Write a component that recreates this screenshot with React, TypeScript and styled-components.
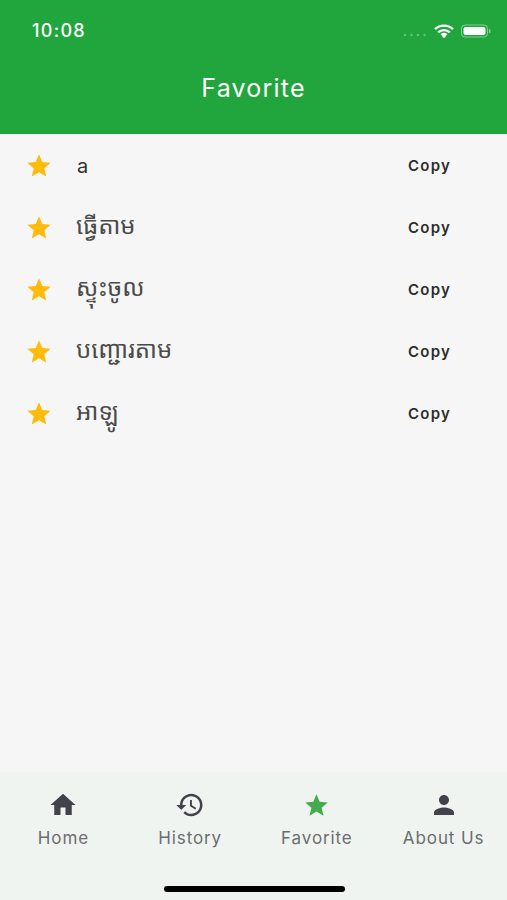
import React from "react";
import styled, { createGlobalStyle } from "styled-components";

const Global = createGlobalStyle`
  html, body { margin: 0; padding: 0; background: #f6f6f6; }
  #root { width: 507px; height: 900px; overflow: hidden; }
  * { box-sizing: border-box; }
`;

const Screen = styled.div`
  width: 507px;
  height: 900px;
  display: flex;
  flex-direction: column;
  font-family: "Inter", "Liberation Sans", sans-serif;
  background: #f6f6f6;
`;

const Header = styled.header`
  height: 134px;
  flex: none;
  background: #21a53d;
  color: #fff;
  display: flex;
  flex-direction: column;
`;

const StatusBar = styled.div`
  height: 74px;
  padding: 20px 16px 0 32px;
  display: flex;
  justify-content: space-between;
  align-items: flex-start;
`;

const Clock = styled.span`
  font-size: 18px;
  line-height: 22px;
  font-weight: 500;
  letter-spacing: 1.3px;
`;

const StatusIcons = styled.div`
  display: flex;
  align-items: center;
  gap: 7px;
  height: 22px;
`;

const Title = styled.h1`
  margin: 0;
  text-align: center;
  font-size: 25px;
  line-height: 28px;
  font-weight: 400;
  letter-spacing: 1.2px;
`;

const List = styled.main`
  flex: 1;
  padding-top: 1px;
`;

const Row = styled.div`
  height: 62px;
  display: flex;
  align-items: center;
  padding: 0 56px 0 25px;
`;

const StarSlot = styled.span`
  width: 51px;
  flex: none;
  display: flex;
`;

const Word = styled.span<{ $latin?: boolean }>`
  flex: 1;
  color: ${(p) => (p.$latin ? "#333" : "#4a4a4a")};
  font-family: "Inter", "Noto Sans Khmer", "Khmer OS", "DejaVu Sans", sans-serif;
  font-size: ${(p) => (p.$latin ? "20px" : "24px")};
  padding-left: ${(p) => (p.$latin ? "1px" : "0")};
  padding-bottom: ${(p) => (p.$latin ? "0" : "7px")};
`;

const CopyLabel = styled.span`
  font-size: 15px;
  font-weight: 600;
  letter-spacing: 1.2px;
  color: #2c2c2c;
  padding-bottom: 2px;
`;

const TabBar = styled.nav`
  height: 128px;
  flex: none;
  background: #eff4f1;
  display: flex;
  flex-direction: column;
`;

const Tabs = styled.div`
  display: grid;
  grid-template-columns: repeat(4, 1fr);
  padding-top: 18px;
`;

const Tab = styled.div`
  display: flex;
  flex-direction: column;
  align-items: center;
  gap: 8px;
`;

const IconSlot = styled.span`
  height: 30px;
  display: flex;
  align-items: center;
  justify-content: center;
`;

const TabLabel = styled.span`
  font-size: 17px;
  line-height: 20px;
  letter-spacing: 0.9px;
  color: #6b6e70;
`;

const HomeIndicator = styled.div`
  width: 181px;
  height: 6px;
  border-radius: 3px;
  background: #000;
  margin: 38px 0 0 164px;
`;

const StarIcon = ({ size, color }: { size: number; color: string }) => (
  <svg width={size} height={size} viewBox="0 0 24 24" fill={color}>
    <path d="M12 17.27 18.18 21l-1.64-7.03L22 9.24l-7.19-.61L12 2 9.19 8.63 2 9.24l5.46 4.73L5.82 21z" />
  </svg>
);

const HomeIcon = () => (
  <svg width="30" height="30" viewBox="0 0 24 24" fill="#42434a">
    <path d="M10 20v-6h4v6h5v-8h3L12 3 2 12h3v8z" />
  </svg>
);

const HistoryIcon = () => (
  <svg width="30" height="30" viewBox="0 0 24 24" fill="#42434a">
    <path d="M13 3c-4.97 0-9 4.03-9 9H1l3.89 3.89.07.14L9 12H6c0-3.87 3.13-7 7-7s7 3.13 7 7-3.13 7-7 7c-1.93 0-3.68-.79-4.94-2.06l-1.42 1.42C8.27 19.99 10.51 21 13 21c4.97 0 9-4.03 9-9s-4.03-9-9-9zm-1 5v5l4.28 2.54.72-1.21-3.5-2.08V8H12z" />
  </svg>
);

const PersonIcon = () => (
  <svg width="30" height="30" viewBox="0 0 24 24" fill="#42434a">
    <path d="M12 12c2.21 0 4-1.79 4-4s-1.79-4-4-4-4 1.79-4 4 1.79 4 4 4zm0 2c-2.67 0-8 1.34-8 4v2h16v-2c0-2.66-5.33-4-8-4z" />
  </svg>
);

const WifiIcon = () => (
  <svg width="20" height="15" viewBox="0 0 20 15" fill="none" stroke="#fff" strokeWidth="2.4">
    <path d="M1 5.2a13 13 0 0 1 18 0" />
    <path d="M4.2 8.4a8.4 8.4 0 0 1 11.6 0" />
    <circle cx="10" cy="12.2" r="1.6" fill="#fff" stroke="none" />
    <path d="M7.4 11a4 4 0 0 1 5.2 0" />
  </svg>
);

const BatteryIcon = () => (
  <svg width="30" height="14" viewBox="0 0 30 14">
    <rect x="0.5" y="1" width="26" height="12" rx="3.5" fill="none" stroke="#fff" strokeOpacity="0.45" />
    <rect x="2.5" y="3" width="22" height="8" rx="2" fill="#fff" />
    <rect x="28" y="5" width="1.5" height="4" rx="0.7" fill="#fff" fillOpacity="0.45" />
  </svg>
);

const SignalDots = () => (
  <svg width="24" height="6" viewBox="0 0 24 6" fill="#fff" fillOpacity="0.3" style={{ marginTop: 8 }}>
    <circle cx="2" cy="3" r="1.3" />
    <circle cx="8.5" cy="3" r="1.3" />
    <circle cx="15" cy="3" r="1.3" />
    <circle cx="21.5" cy="3" r="1.3" />
  </svg>
);

const words = ["a", "ធ្វើតាម", "ស្ទុះចូល", "បញ្ជោរតាម", "អាឡូ"];

const tabs: { label: string; icon: React.ReactNode }[] = [
  { label: "Home", icon: <HomeIcon /> },
  { label: "History", icon: <HistoryIcon /> },
  { label: "Favorite", icon: <StarIcon size={27} color="#43ab4d" /> },
  { label: "About Us", icon: <PersonIcon /> },
];

export default function App() {
  return (
    <Screen>
      <Global />
      <Header>
        <StatusBar>
          <Clock>10:08</Clock>
          <StatusIcons>
            <SignalDots />
            <WifiIcon />
            <BatteryIcon />
          </StatusIcons>
        </StatusBar>
        <Title>Favorite</Title>
      </Header>
      <List>
        {words.map((w) => (
          <Row key={w}>
            <StarSlot>
              <StarIcon size={28} color="#ffbb0b" />
            </StarSlot>
            <Word $latin={w === "a"}>{w}</Word>
            <CopyLabel>Copy</CopyLabel>
          </Row>
        ))}
      </List>
      <TabBar>
        <Tabs>
          {tabs.map((t) => (
            <Tab key={t.label}>
              <IconSlot>{t.icon}</IconSlot>
              <TabLabel>{t.label}</TabLabel>
            </Tab>
          ))}
        </Tabs>
        <HomeIndicator />
      </TabBar>
    </Screen>
  );
}
